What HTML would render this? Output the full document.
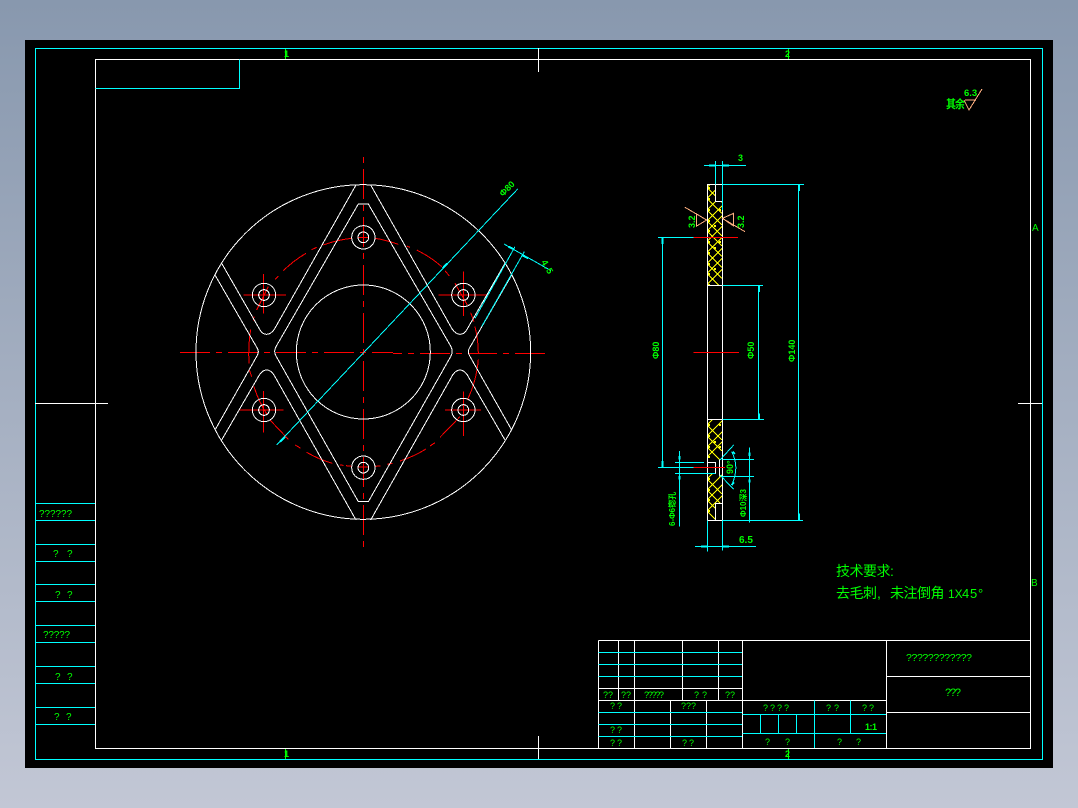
<!DOCTYPE html>
<html><head><meta charset="utf-8"><style>
html,body{margin:0;padding:0;width:1078px;height:808px;overflow:hidden;background:linear-gradient(180deg,#8898ae 0%,#c2c7d5 100%)}
svg{position:absolute;left:0;top:0}
text{font-family:"Liberation Sans","Noto Sans CJK SC",sans-serif;fill:#0f0}
.w{stroke:#fff;fill:none;stroke-width:1}
.c{stroke:#0ff;fill:none;stroke-width:1}
.r{stroke:#f00;fill:none;stroke-width:1}
.q{font-size:10px;letter-spacing:1px}
</style></head><body>
<svg width="1078" height="808" viewBox="0 0 1078 808" shape-rendering="crispEdges">
<rect x="25" y="40" width="1028" height="728" fill="#000"/>
<rect x="35.5" y="48.5" width="1007" height="711" class="c"/>
<rect x="95.5" y="59.5" width="935" height="689" class="w"/>
<path class="c" d="M95.5 88.5H239.5V59.5"/>
<path class="w" d="M538.5 48V72M538.5 736V759M35 403.5H108M1018 403.5H1042"/>
<path d="M285.5 49V59M788.5 49V59M285.5 749V759M788.5 749V759" stroke="#0f0"/>
<text x="284" y="57" font-size="9" font-weight="bold">1</text>
<text x="785" y="57" font-size="9" font-weight="bold">2</text>
<text x="284" y="757" font-size="9" font-weight="bold">1</text>
<text x="785" y="757" font-size="9" font-weight="bold">2</text>
<text x="1032" y="231" font-size="10">A</text>
<text x="1031" y="586" font-size="10">B</text>

<!-- left table -->
<path class="c" d="M36 503.5H95M36 520.5H95M36 544.5H95M36 561.5H95M36 584.5H95M36 601.5H95M36 625.5H95M36 642.5H95M36 666.5H95M36 683.5H95M36 707.5H95M36 724.5H95"/>
<text x="39" y="517" class="q" letter-spacing="1" textLength="34">??????</text>
<text x="53" y="557" class="q">?</text><text x="67" y="557" class="q">?</text>
<text x="55" y="598" class="q">?</text><text x="67" y="598" class="q">?</text>
<text x="43" y="638" class="q" textLength="28">?????</text>
<text x="55" y="680" class="q">?</text><text x="67" y="680" class="q">?</text>
<text x="54" y="720" class="q">?</text><text x="66" y="720" class="q">?</text>

<!-- title block -->
<path class="w" d="M598.5 640.5H1030M598.5 640.5V748M618.5 640.5V700M634.5 640.5V748M682.5 640.5V700M718.5 640.5V700M742.5 640.5V748M886.5 640.5V748M598.5 688.5H742M598.5 700.5H886M670.5 700.5V748M706.5 700.5V748M886.5 676.5H1030M886.5 712.5H1030"/>
<path class="c" d="M598.5 652.5H742M598.5 664.5H742M598.5 676.5H742M598.5 712.5H742M598.5 724.5H742M598.5 736.5H742M742.5 714.5H886M742.5 733.5H886M814.5 700.5V748M850.5 700.5V733M760.5 714.5V733M778.5 714.5V733M796.5 714.5V733"/>
<g font-size="9">
<text x="603" y="698">??</text><text x="621" y="698">??</text><text x="644" y="698" textLength="20">?????</text>
<text x="694" y="698" letter-spacing="3">??</text><text x="725" y="698">??</text>
<text x="610" y="709" letter-spacing="2">??</text><text x="681" y="709">???</text>
<text x="610" y="733" letter-spacing="2">??</text><text x="610" y="746" letter-spacing="2">??</text><text x="682" y="746" letter-spacing="2">??</text>
<text x="763" y="711" letter-spacing="2">????</text><text x="826" y="711" letter-spacing="3">??</text><text x="862" y="711" letter-spacing="2">??</text>
<text x="865" y="730" font-weight="bold" style="letter-spacing:-.5px">1:1</text>
<text x="765" y="745">?</text><text x="785" y="745">?</text><text x="837" y="745">?</text><text x="856" y="745">?</text>
</g>
<text x="906" y="661" font-size="10.5" textLength="66">????????????</text>
<text x="945" y="696" font-size="11" textLength="16">???</text>

<!-- centre lines -->
<path class="r" d="M180 352.5H210M216 352.5H222M228 352.5H258M264 352.5H270M276 352.5H306M312 352.5H318M324 352.5H354M360 352.5H366M372 352.5H393M393 353.5H402M408 353.5H414M420 353.5H450M456 353.5H462M468 353.5H497M503 353.5H509M515 353.5H545"/>
<path class="r" stroke-dasharray="6 6 30 6" d="M363.5 157V550"/>

<!-- plate, in 3x coordinates -->
<g transform="translate(180 150) scale(0.33333)" stroke-width="3">
<g class="r" style="stroke-width:3">
<path d="M430 285A345 345 0 0 1 515 265M585 265A345 345 0 0 1 655 283M680 288L690 292M710 300A345 345 0 0 1 785 350M795 362L808 378M825 400L862 465M872 488L882 515M885 530A345 345 0 0 1 895 610M895 628A345 345 0 0 1 862 750M840 800L780 862M765 878L750 888M738 897A345 345 0 0 1 660 933M637 940L622 943M602 948L585 949M515 949L498 947M490 946L480 945M457 940A345 345 0 0 1 380 907M362 895L346 885M325 868L270 810M262 795A345 345 0 0 1 222 710M215 680L208 660M207 640Q204 590 212 538M220 512L222 500M230 480L265 410M285 388L295 378M310 362A345 345 0 0 1 378 310M395 299L410 292"/>
<path d="M190 435H318M250 372V490M775 435H925M850 365V498M178 780H310M250 723V848M795 780H903M850 725V858M535 262H565M535 951H565"/>
</g>
<g style="stroke-width:3" class="w">
<circle cx="550" cy="606" r="502"/>
<circle cx="550" cy="606" r="201"/>
<path d="M528 105L283 538Q272 553 260 553Q248 553 240 540L125 340"/>
<path d="M572 105L817 538Q828 553 840 553Q852 553 860 540L975 340"/>
<path d="M105 375L232 595Q238 605 232 616L105 840"/>
<path d="M995 375L868 595Q862 605 868 616L995 840"/>
<path d="M125 870L238 675Q248 660 260 660Q272 660 282 675L528 1110"/>
<path d="M975 870L862 675Q852 660 840 660Q828 660 818 675L572 1110"/>
<path d="M535 162H565L813 590Q820 604 813 618L565 1055H535L288 618Q280 604 288 590Z"/>
<circle cx="550" cy="262" r="35"/><circle cx="550" cy="262" r="16"/>
<circle cx="252" cy="435" r="35"/><circle cx="252" cy="435" r="16"/>
<circle cx="850" cy="435" r="35"/><circle cx="850" cy="435" r="16"/>
<circle cx="252" cy="780" r="35"/><circle cx="252" cy="780" r="16"/>
<circle cx="850" cy="780" r="35"/><circle cx="850" cy="780" r="16"/>
<circle cx="550" cy="953" r="35"/><circle cx="550" cy="953" r="16"/>
</g>
<g style="stroke-width:3" class="c">
<path d="M1013 117L290 885"/>
<path d="M972 282L1113 362M1005 290L885 505M1033 305L905 530"/>
<path d="M788 355L802 340M300 875L315 860M985 290L1003 298M1025 315L1045 325" style="stroke-width:6"/>
</g>
</g>
<text transform="translate(503 197) rotate(-45)" font-size="9" font-weight="bold">Φ80</text>
<text transform="translate(541 262) rotate(60)" font-size="9" font-weight="bold" style="letter-spacing:1px">4.5</text>

<!-- section view -->
<defs>
<clipPath id="hc"><path d="M707 184H715V201H722V285H707Z"/><path d="M707 419H722V458L718 462H707ZM707 473H722V503H715V520H707Z"/></clipPath>
</defs>
<path clip-path="url(#hc)" stroke="#ff0" fill="none" d="M707 187.5l15 15m-15-15l15-15M707 198.5l15 15m-15-15l15-15M707 210l15 15m-15-15l15-15M707 221l15 15m-15-15l15-15M707 231l15 15m-15-15l15-15M707 241.5l15 15m-15-15l15-15M707 252.5l15 15m-15-15l15-15M707 263.5l15 15m-15-15l15-15M707 273.5l15 15m-15-15l15-15M707 284.5l15-15M707 425l15 15m-15-15l15-15M707 436l15 15m-15-15l15-15M707 447l15 15m-15-15l15-15M707 457l15-15M707 479l15 15m-15-15l15-15M707 490l15 15m-15-15l15-15M707 500l15 15m-15-15l15-15M707 511l15 15m-15-15l15-15"/>
<path fill="#ff0" d="M708 187h2v2h-2zM708 198h2v2h-2zM708 209h2v2h-2zM708 220h2v2h-2zM708 230h2v2h-2zM708 241h2v2h-2zM708 252h2v2h-2zM708 263h2v2h-2zM708 273h2v2h-2zM708 284h2v1h-2zM708 424h2v2h-2zM708 435h2v2h-2zM708 446h2v2h-2zM708 456h2v2h-2zM708 478h2v2h-2zM708 489h2v2h-2zM708 499h2v2h-2zM708 510h2v2h-2zM714 225h2v2h-2zM714 247h2v2h-2zM714 268h2v2h-2zM714 441h2v2h-2zM719 209h2v2h-2zM719 241h2v2h-2zM719 424h2v2h-2zM719 446h2v2h-2z"/>
<g class="w">
<path d="M707.5 184.5H722.5V520.5H707.5ZM715.5 184.5V201.5H722.5M707.5 285.5H722.5M707.5 419.5H722.5M715.5 520.5V503.5H722.5M707.5 462.5H715.5V473.5H707.5M719.5 459.5V476.5"/>
</g>
<g transform="translate(640 140) scale(0.33333)">
<g class="c" style="stroke-width:3">
<path d="M192 76H318M226 63V133M247 63V210M247 133H492M475 133V1140M247 436H369M355 436V838M54 292H160M67 292V982M54 982H160"/>
<path d="M207 76H225M247 76H267M477 133V153M357 436V456M67 292V312" style="stroke-width:6"/>
</g>
<g style="stroke-width:3" class="r"><path d="M160 292H294M160 982H255M160 637H297"/></g>
<g fill="none" stroke="#ffb080" style="stroke-width:3"><path d="M135 202L200 240L170 258V222L200 240M315 275L247 235L281 220V258L247 235"/></g>
</g>
<g transform="translate(640 350) scale(0.33333)">
<g class="c" style="stroke-width:3">
<path d="M247 208H372M247 511H489M105 337H192M105 370H226M118 303V530M247 328H342M247 379H342M328 292V518M281 285L240 330M281 418L240 375M275 305Q300 352 275 405M202 511V605M247 511V602M165 589H348"/>
<path d="M357 190V208M67 333V352M118 318V328M118 378V388M328 308V318M328 388V398M477 491V511M183 590H202M247 590H267M278 305L285 312M275 405L282 397" style="stroke-width:6"/>
</g>
</g>
<g font-weight="bold" font-size="9">
<text x="738" y="161">3</text>
<text transform="translate(695 228) rotate(-90)">3.2</text>
<text transform="translate(744 228) rotate(-90)">3.2</text>
<text transform="translate(659 359) rotate(-90)">Φ80</text>
<text transform="translate(754 359) rotate(-90)">Φ50</text>
<text transform="translate(795 362) rotate(-90)">Φ140</text>
<text transform="translate(733 474) rotate(-90)">90°</text>
<text transform="translate(675 526) rotate(-90)" font-size="8">6-Φ6锪孔</text>
<text transform="translate(746 517) rotate(-90)" font-size="8">Φ10深3</text>
<text x="739" y="543" font-size="10">6.5</text>
<text x="964" y="96" font-size="9.5">6.3</text>
</g>
<g fill="none" stroke="#ffb080"><path d="M965 100H976M964 100L969 110L982 89"/></g>
<text x="946" y="107" font-size="10" font-weight="bold" transform="translate(0 -16) scale(1 1.16)" style="letter-spacing:-1px">其余</text>

<!-- notes -->
<g font-size="14">
<text x="836" y="576" style="letter-spacing:-.5px">技术要求:</text>
<text x="836" y="598" style="letter-spacing:-.5px">去毛刺</text>
<text x="877" y="598">,</text>
<text x="890" y="598" style="letter-spacing:-.5px">未注倒角</text>
<text x="948" y="598" font-size="12">1X</text>
<text x="962" y="598" font-size="13">4</text>
<text x="970" y="598" font-size="13">5</text>
<text x="978" y="598" font-size="13">°</text>
</g>
</svg>
</body></html>
